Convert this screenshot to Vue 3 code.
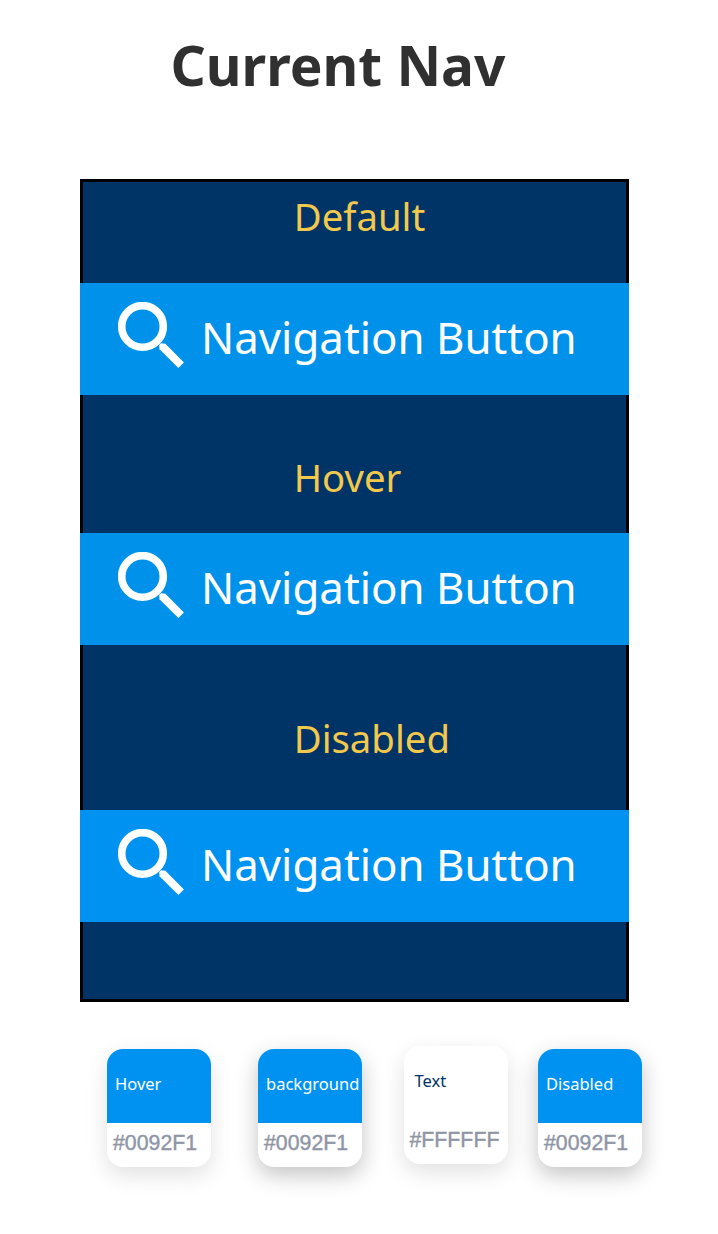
<script setup>
const sections = [
  { name: 'Default', tone: 'base' },
  { name: 'Hover', tone: 'base' },
  { name: 'Disabled', tone: 'disabled' },
]

const swatches = [
  { name: 'Hover', hex: '#0092F1', kind: 'soft' },
  { name: 'background', hex: '#0092F1', kind: 'strong' },
  { name: 'Text', hex: '#FFFFFF', kind: 'light' },
  { name: 'Disabled', hex: '#0092F1', kind: 'strong' },
]
</script>

<template>
  <main class="page">
    <h1 class="title">Current Nav</h1>

    <section class="panel">
      <div v-for="s in sections" :key="s.name" class="state" :class="'state-' + s.name.toLowerCase()">
        <h2 class="label">{{ s.name }}</h2>
        <button class="nav" :class="s.tone">
          <svg class="icon" viewBox="0 0 66 66" aria-hidden="true">
            <circle cx="24.5" cy="24.4" r="20.8" fill="none" stroke="#fff" stroke-width="7.6" />
            <path d="M41.2 43.1 L43.1 41.2 L47.4 41.8 L65.9 60.4 L60.4 65.9 L41.5 47.2 Z" fill="#fff" />
          </svg>
          <span class="nav-text">Navigation Button</span>
        </button>
      </div>
    </section>

    <section class="swatches">
      <article v-for="w in swatches" :key="w.name" class="card" :class="w.kind">
        <div class="color">{{ w.name }}</div>
        <div class="hex">{{ w.hex }}</div>
      </article>
    </section>
  </main>
</template>

<style>
body {
  background: #fff;
}
</style>

<style scoped>
.page {
  box-sizing: border-box;
  width: 718px;
  height: 1234px;
  overflow: hidden;
  padding-top: 27px;
  font-family: "Noto Sans", sans-serif;
}

.title {
  margin: 0 0 0 170.5px;
  height: 76px;
  line-height: 76px;
  font-size: 55px;
  font-weight: 700;
  color: #303030;
  white-space: nowrap;
}

.panel {
  box-sizing: border-box;
  width: 549px;
  height: 823px;
  margin: 76px 0 0 79.5px;
  border: 3px solid #000;
  background: #003366;
}

.state {
  display: flex;
  flex-direction: column;
}

.state-default {
  padding-top: 9px;
  --gap: 42px;
}

.state-hover {
  padding-top: 57px;
  --gap: 31px;
}

.state-disabled {
  padding-top: 68px;
  --gap: 47px;
}

.label {
  margin: 0 0 var(--gap) 211.2px;
  height: 50px;
  line-height: 50px;
  font-size: 38.3px;
  font-weight: 400;
  color: #f2c94c;
  white-space: nowrap;
}

.nav {
  display: flex;
  align-items: flex-start;
  box-sizing: border-box;
  flex: none;
  width: 549px;
  height: 112px;
  margin: 0 -3px;
  padding: 19px 0 0 38.5px;
  border: 0;
  color: #fff;
  font: 400 43.8px/71px "Noto Sans", sans-serif;
}

.base {
  background: #0092eb;
}

.disabled {
  background: #0092f1;
}

.icon {
  flex: none;
  width: 66px;
  height: 66px;
}

.nav-text {
  margin-left: 17px;
  white-space: nowrap;
}

.swatches {
  display: grid;
  grid-template-columns: 151px 145.5px 134.5px 104.5px;
  margin: 47px 0 0 107px;
}

.card {
  width: 104.3px;
  height: 118px;
  border-radius: 16px;
  background: #fff;
}

.soft {
  box-shadow: 0 8px 22px rgba(0, 0, 0, 0.12);
}

.strong {
  box-shadow: 0 8px 22px rgba(0, 0, 0, 0.24);
}

.light {
  margin-top: -3px;
  box-shadow: 0 8px 22px rgba(0, 0, 0, 0.12);
}

.color {
  box-sizing: border-box;
  height: 74px;
  padding-left: 8px;
  border-radius: 16px 16px 0 0;
  background: #0092f1;
  color: #fff;
  font-size: 16.5px;
  line-height: 70px;
  white-space: nowrap;
}

.light .color {
  padding-left: 11px;
  background: #fff;
  color: #003366;
}

.hex {
  padding-left: 6px;
  font: 400 21.3px/41px "Liberation Sans", Arial, sans-serif;
  color: #8f95a5;
  -webkit-text-stroke: 0.4px #8f95a5;
  white-space: nowrap;
}
</style>
